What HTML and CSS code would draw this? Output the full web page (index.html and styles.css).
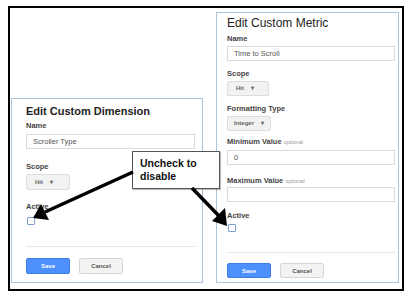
FILE: index.html
```html
<!DOCTYPE html>
<html lang="en">

<head>
    <meta charset="UTF-8">
    <meta name="viewport" content="width=device-width, initial-scale=1.0">
    <title>Custom Dimension and Metric</title>
    <link rel="stylesheet" href="styles.css">
</head>

<body>
    <div class="page">
        <div class="frame">
            <div class="card card-dim">
                <h2 class="title title-bold">Edit Custom Dimension</h2>
                <div class="label dim-name">Name</div>
                <div class="field dim-field">Scroller Type</div>

                <div class="label dim-scope">Scope</div>
                <div class="drop dim-drop">Hit <span class="caret">&#9662;</span></div>

                <div class="label dim-active">Active</div>
                <div class="check dim-check"></div>

                <div class="sep dim-sep"></div>
                <div class="actions dim-actions">
                    <button type="button" class="btn btn-save">Save</button>
                    <button type="button" class="btn btn-cancel">Cancel</button>
                </div>
            </div>

            <div class="card card-met">
                <h2 class="title">Edit Custom Metric</h2>
                <div class="label met-name">Name</div>
                <div class="field met-field">Time to Scroll</div>

                <div class="label met-gap">Scope</div>
                <div class="drop met-drop">Hit <span class="caret">&#9662;</span></div>

                <div class="label met-gap">Formatting Type</div>
                <div class="drop met-drop met-drop-wide">Integer <span class="caret">&#9662;</span></div>

                <div class="label met-min">Minimum Value <span class="opt">optional</span></div>
                <div class="field met-field-min">0</div>

                <div class="label met-max">Maximum Value <span class="opt">optional</span></div>
                <div class="field met-field-max"></div>

                <div class="label met-active">Active</div>
                <div class="check met-check"></div>

                <div class="sep met-sep"></div>
                <div class="actions met-actions">
                    <button type="button" class="btn btn-save">Save</button>
                    <button type="button" class="btn btn-cancel">Cancel</button>
                </div>
            </div>
        </div>

        <!-- callout over both cards -->
        <div class="callout">Uncheck to<br>disable</div>
        <svg class="arrows" width="411" height="297" viewBox="0 0 411 297">
            <line x1="133" y1="172" x2="45" y2="212" stroke="#000" stroke-width="3.5" />
            <polygon points="33,218 41,204 49,220" fill="#000" />
            <line x1="192" y1="188" x2="219" y2="216" stroke="#000" stroke-width="3.5" />
            <polygon points="227,226 212,221 225,208" fill="#000" />
        </svg>
    </div>
</body>

</html>
```

FILE: styles.css
```css
body {
    margin: 0;
    font-family: "Liberation Sans", Arial, sans-serif;
    background: #fff;
}

.page {
    position: relative;
    width: 411px;
    height: 297px;
    padding-top: 6px;
    box-sizing: border-box;
}

.frame {
    margin: 0 8px;
    width: 396px;
    height: 285px;
    box-sizing: border-box;
    border: 2px solid #000;
    padding: 0 3px 6px 1px;
    display: flex;
    align-items: flex-end;
    gap: 13px;
}

.card {
    box-sizing: border-box;
    border: 1px solid #a9c4dc;
    background: #fff;
    display: flex;
    flex-direction: column;
    align-items: flex-start;
}

.card-dim {
    width: 192px;
    height: 185px;
    padding: 5px 7px 0 14px;
}

.card-met {
    width: 183px;
    height: 271px;
    padding: 3px 3px 0 10px;
}

.title {
    margin: 0;
    font-size: 12px;
    line-height: 14px;
    font-weight: normal;
    color: #222;
}

.title-bold {
    font-size: 11px;
    font-weight: bold;
}

.label {
    font-size: 7.5px;
    line-height: 10px;
    font-weight: bold;
    color: #444;
}

.opt {
    font-size: 5.5px;
    font-weight: normal;
    color: #999;
}

.field {
    box-sizing: border-box;
    width: 100%;
    height: 15px;
    border: 1px solid #d9d9d9;
    padding-left: 6px;
    font-size: 7.5px;
    line-height: 13px;
    color: #555;
    margin-top: 3px;
}

.drop {
    box-sizing: border-box;
    height: 16px;
    border: 1px solid #dcdcdc;
    border-radius: 2px;
    background: #f2f2f2;
    font-size: 6px;
    font-weight: bold;
    line-height: 14px;
    color: #666;
    padding-left: 8px;
    margin-top: 2px;
}

.caret {
    font-size: 6px;
    margin-left: 5px;
}

.check {
    width: 8px;
    height: 8px;
    box-sizing: border-box;
    border: 1px solid #7f9fd0;
    border-radius: 1px;
    background: #fff;
    margin-left: 1px;
}

.sep {
    width: 100%;
    height: 1px;
    background: #e5e5e5;
}

.actions {
    display: flex;
    gap: 9px;
}

.btn {
    width: 44px;
    height: 16px;
    padding: 0;
    border-radius: 2px;
    font-family: inherit;
    font-size: 6px;
    font-weight: bold;
    cursor: pointer;
}

.btn-save {
    background: #4d90fe;
    border: 1px solid #3b7ee8;
    color: #fff;
}

.btn-cancel {
    background: #f3f3f3;
    border: 1px solid #d6d6d6;
    color: #555;
}

/* left card spacing */
.dim-name { margin-top: 3px; }
.dim-scope { margin-top: 13px; }
.dim-active { margin-top: 12px; }
.dim-check { margin-top: 5px; }
.dim-sep { margin-top: 21px; }
.dim-actions { margin-top: 11px; }
.dim-drop { width: 44px; }

/* right card spacing */
.met-name { margin-top: 4px; }
.met-field { margin-top: 2px; }
.met-gap { margin-top: 8px; }
.met-drop { width: 42px; height: 15px; line-height: 13px; }
.met-drop-wide { width: 44px; padding-left: 6px; }
.met-min { margin-top: 6px; }
.met-field-min { margin-top: 3px; }
.met-max { margin-top: 11px; }
.met-field-max { margin-top: 1px; }
.met-active { margin-top: 9px; }
.met-check { margin-top: 3px; }
.met-sep { margin-top: 20px; }
.met-actions { margin-top: 10px; }
.met-actions .btn { height: 15px; }

.callout {
    position: absolute;
    left: 132px;
    top: 151px;
    width: 88px;
    height: 38px;
    box-sizing: border-box;
    border: 1px solid #555;
    background: #fff;
    box-shadow: 1px 1px 1px rgba(0, 0, 0, 0.25);
    padding: 5px 0 0 7px;
    font-size: 10.5px;
    line-height: 13px;
    font-weight: bold;
    color: #111;
}

.arrows {
    position: absolute;
    left: 0;
    top: 0;
    pointer-events: none;
}
```
